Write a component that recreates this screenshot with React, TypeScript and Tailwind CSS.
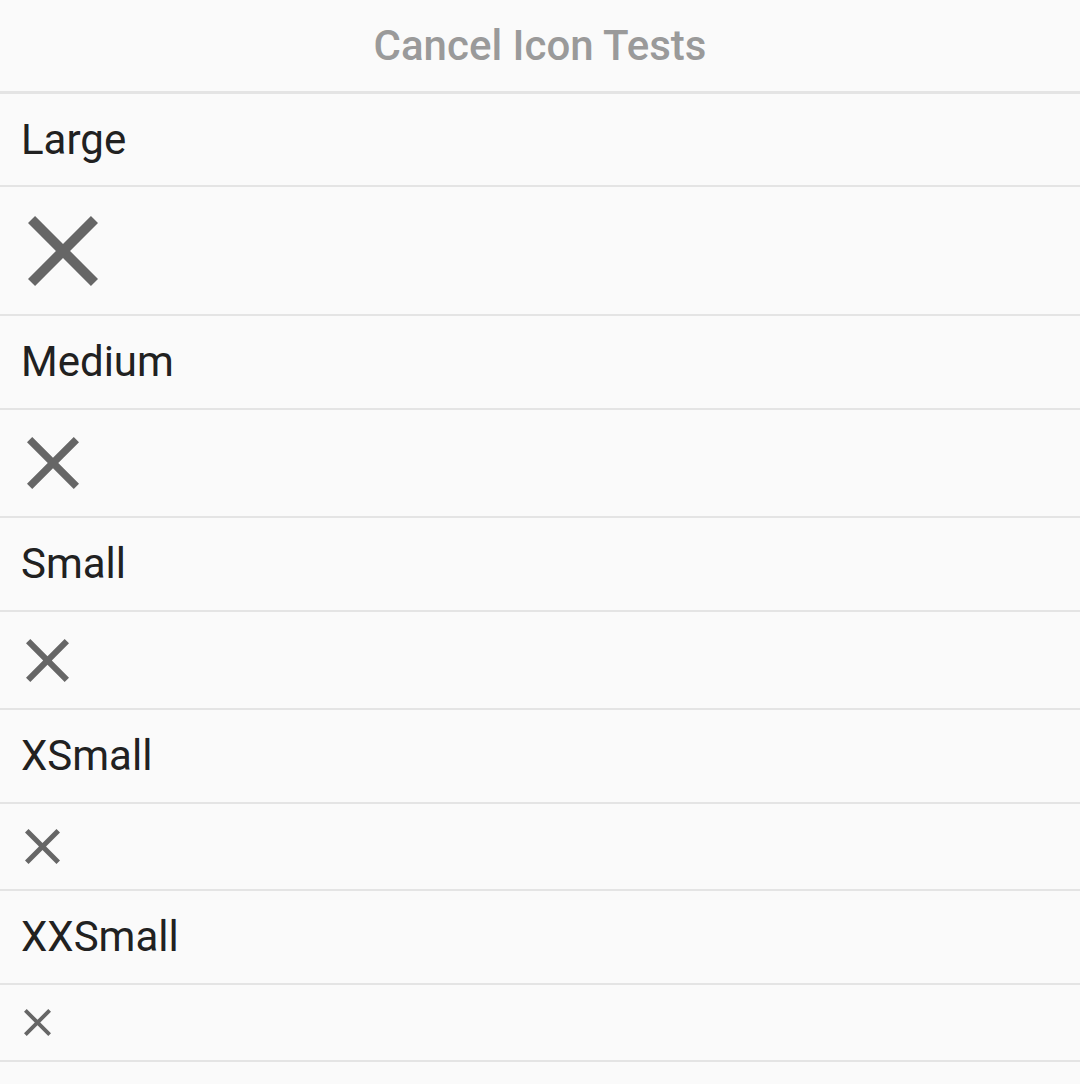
const font = { fontFamily: 'Roboto, "Noto Sans", sans-serif' }

function CancelIcon({ size }: { size: number }) {
  return (
    <svg width={size} height={size} viewBox="5 5 14 14" className="block shrink-0" aria-hidden="true">
      <path
        fill="#666666"
        d="M19 6.41L17.59 5 12 10.59 6.41 5 5 6.41 10.59 12 5 17.59 6.41 19 12 13.41 17.59 19 19 17.59 13.41 12z"
      />
    </svg>
  )
}

type Test = { label: string; size: number; rowH: string; left: string }

const tests: Test[] = [
  { label: 'Large', size: 70, rowH: 'h-[129px]', left: 'pl-[28px]' },
  { label: 'Medium', size: 52, rowH: 'h-[108px]', left: 'pl-[27px]' },
  { label: 'Small', size: 43, rowH: 'h-[98px]', left: 'pl-[26px]' },
  { label: 'XSmall', size: 35, rowH: 'h-[87px]', left: 'pl-[25px]' },
  { label: 'XXSmall', size: 27, rowH: 'h-[77px]', left: 'pl-[24px]' },
]

export default function App() {
  return (
    <div className="min-h-[1084px] w-full bg-[#fafafa]" style={font}>
      <header className="flex h-[94px] items-center justify-center border-b-[3px] border-[#e4e4e4]">
        <h1 className="text-[42px] font-medium leading-none text-[#9a9a9a]">Cancel Icon Tests</h1>
      </header>
      {tests.map((t, i) => (
        <div key={t.label}>
          <div
            className={`flex items-center border-b-2 border-[#e4e4e4] pl-[21px] ${i === 0 ? 'h-[93px]' : 'h-[94px]'}`}
          >
            <span className="text-[42px] leading-none text-[#212121]">{t.label}</span>
          </div>
          <div className={`flex items-center border-b-2 border-[#e4e4e4] ${t.rowH} ${t.left}`}>
            <CancelIcon size={t.size} />
          </div>
        </div>
      ))}
    </div>
  )
}
